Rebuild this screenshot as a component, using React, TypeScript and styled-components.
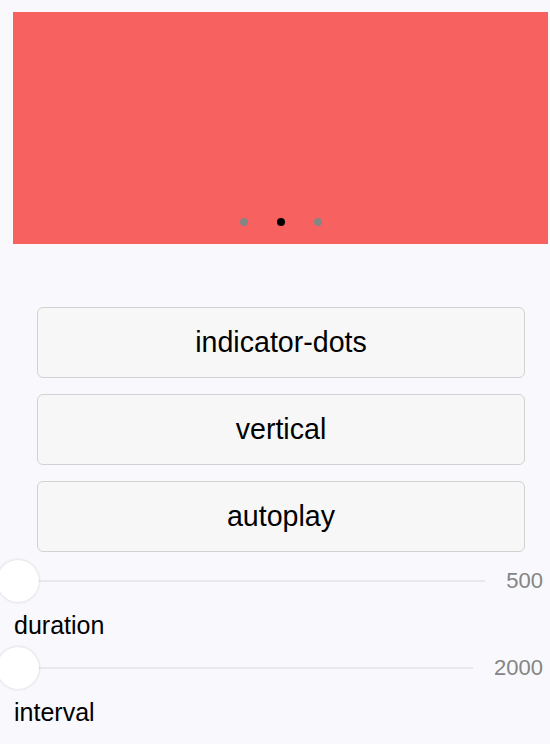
import React from "react";
import styled, { createGlobalStyle } from "styled-components";

const Global = createGlobalStyle`
  html, body { margin: 0; padding: 0; background: #f9f8fc; }
  body { font-family: "Liberation Sans", Arial, Helvetica, sans-serif; color: #000; overflow: hidden; }
`;

const Page = styled.div`
  width: 550px;
  min-height: 744px;
  padding-top: 12px;
  box-sizing: border-box;
  background: #f9f8fc;
`;

const Swiper = styled.div`
  position: relative;
  margin-left: 13px;
  width: 535px;
  height: 232px;
  background: #f76260;
`;

const Dots = styled.div`
  position: absolute;
  left: 0;
  right: 0;
  bottom: 18px;
  display: flex;
  justify-content: center;
  gap: 29px;
`;

const Dot = styled.span<{ $active?: boolean }>`
  width: 8px;
  height: 8px;
  border-radius: 50%;
  background: ${(p) => (p.$active ? "#000" : "#858585")};
`;

const Buttons = styled.div`
  margin: 63px 0 0 37px;
  width: 488px;
  display: flex;
  flex-direction: column;
  gap: 16px;
`;

const Btn = styled.button`
  height: 71px;
  border: 1px solid #d2d2d2;
  border-radius: 6px;
  background: #f7f7f7;
  font-family: "Liberation Sans", Arial, Helvetica, sans-serif;
  font-size: 28.6px;
  color: #000;
  padding: 0;
`;

const Controls = styled.div`
  margin-top: 8px;
  display: flex;
  flex-direction: column;
  gap: 4.5px;
`;

const Group = styled.div`
  display: flex;
  flex-direction: column;
`;

const SliderRow = styled.div`
  height: 42px;
  display: flex;
  align-items: center;
  padding-left: 18px;
  padding-right: 7px;
`;

const Track = styled.div`
  position: relative;
  flex: 1;
  height: 2px;
  background: #e9e9e9;
`;

const Thumb = styled.div`
  position: absolute;
  top: 50%;
  width: 42px;
  height: 42px;
  margin: -21px 0 0 -21px;
  border-radius: 50%;
  background: #fff;
  box-shadow: 0 0 3px rgba(0, 0, 0, 0.18);
`;

const Value = styled.span`
  margin-left: 21px;
  font-size: 22px;
  color: #858585;
`;

const Label = styled.div`
  margin: 6px 0 0 14px;
  font-size: 25px;
  line-height: 34px;
`;

const sliders = [
  { name: "duration", value: 500, pct: 0 },
  { name: "interval", value: 2000, pct: 0 },
];

export default function App() {
  return (
    <Page>
      <Global />
      <Swiper>
        <Dots>
          <Dot />
          <Dot $active />
          <Dot />
        </Dots>
      </Swiper>
      <Buttons>
        <Btn>indicator-dots</Btn>
        <Btn>vertical</Btn>
        <Btn>autoplay</Btn>
      </Buttons>
      <Controls>
        {sliders.map((s) => (
          <Group key={s.name}>
            <SliderRow>
              <Track>
                <Thumb style={{ left: `${s.pct}%` }} />
              </Track>
              <Value>{s.value}</Value>
            </SliderRow>
            <Label>{s.name}</Label>
          </Group>
        ))}
      </Controls>
    </Page>
  );
}
